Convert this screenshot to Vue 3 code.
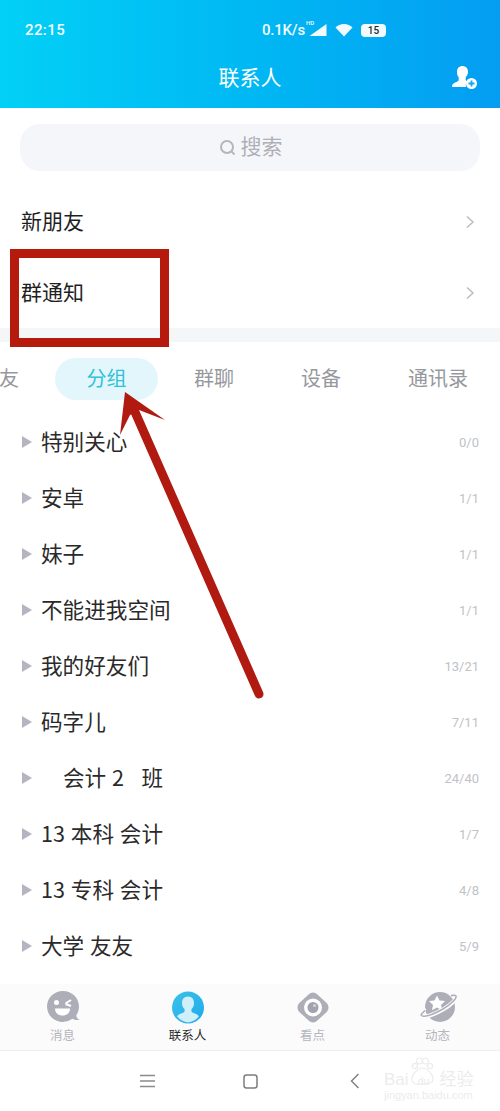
<template>
  <div class="phone">
    <header class="top">
      <div class="status">
        <span class="time">22:15</span>
        <div class="status-right">
          <span class="speed">0.1K/s</span>
          <span class="hd">HD</span>
          <svg class="signal" width="18" height="14" viewBox="0 0 18 14"><path d="M17.500 1v12H.5z" fill="#fff" /></svg>
          <svg class="wifi" width="18" height="14" viewBox="0 0 18 14"><path d="M9 13.500 .5 4.600C2.600 2.300 5.600 1 9 1s6.400 1.300 8.500 3.600z" fill="#fff" /></svg>
          <span class="battery">15</span>
        </div>
      </div>
      <div class="title-bar">
        <span class="title">联系人</span>
        <svg class="add-user" width="26" height="24" viewBox="0 0 26 24">
          <path d="M10.500 0c3.300 0 5.500 2.400 5.500 5.800 0 2.400-1 4.300-2.300 5.500v2.200c0 .9.500 1.400 1.500 1.800-.9 1-1.400 2.300-1.400 3.700 0 .7.100 1.400.3 2H.8c-.5 0-.8-.3-.8-.8 0-2 2-3.200 4.400-4.200 1.500-.7 2.300-1.200 2.300-2.300v-2.400C5.500 10 5 8.100 5 5.800 5 2.400 7.200 0 10.500 0z" fill="#fff" />
          <circle cx="19.500" cy="17.500" r="5.500" fill="#fff" />
          <path d="M19.500 14.500v6M16.500 17.500h6" stroke="#1aa6ec" stroke-width="1.800" />
        </svg>
      </div>
    </header>

    <div class="search-wrap">
      <div class="search">
        <svg width="20" height="20" viewBox="0 0 20 20" fill="none" stroke="#b4b6bd" stroke-width="2">
          <circle cx="9" cy="9" r="6" />
          <path d="m13.500 13.500 3 3" />
        </svg>
        <span class="search-text">搜索</span>
      </div>
    </div>

    <div class="entry" v-for="e in entries" :key="e">
      <span class="entry-text">{{ e }}</span>
      <svg width="10" height="14" viewBox="0 0 10 14" fill="none" stroke="#b9bbc0" stroke-width="1.400"><path d="m2 1.500 6 5.500-6 5.500" /></svg>
    </div>

    <div class="gap"></div>

    <nav class="tabs">
      <span class="tab tab-cut">友</span>
      <span class="tab active">分组</span>
      <span class="tab t2">群聊</span>
      <span class="tab t3">设备</span>
      <span class="tab t4">通讯录</span>
    </nav>

    <ul class="groups">
      <li v-for="g in groups" :key="g.name">
        <i class="tri"></i>
        <span class="name" :class="{ indent: g.indent }">{{ g.name }}</span>
        <span class="count">{{ g.count }}</span>
      </li>
    </ul>

    <footer class="tabbar">
      <div class="bar-item">
        <svg width="36" height="36" viewBox="0 0 36 36">
          <path d="M18 1c9 0 16 7 16 15.500 0 3.400-1 6.400-2.800 8.900.4 2 1.500 3.500 3.300 4.500-2.800.5-5.200 0-7.200-1.200A16 16 0 0 1 18 32C9 32 2 25 2 16.500S9 1 18 1z" fill="#aeaeb9" />
          <circle cx="11.500" cy="12.500" r="2.500" fill="#fff" />
          <path d="m20.500 13.500 5.500-3.500M20.500 14l5.500 2" stroke="#fff" stroke-width="2" fill="none" />
          <path d="M10 18.500h15c0 4.500-3.300 7-7.500 7s-7.500-2.500-7.500-7z" fill="#fff" />
        </svg>
        <span>消息</span>
      </div>
      <div class="bar-item on">
        <svg width="36" height="36" viewBox="0 0 36 36">
          <defs>
            <linearGradient id="avatarFill" x1="0" y1="0" x2="1" y2="1">
              <stop offset="0" stop-color="#3cc2e6" />
              <stop offset="1" stop-color="#1fa9ee" />
            </linearGradient>
          </defs>
          <circle cx="18" cy="17.500" r="16" fill="url(#avatarFill)" />
          <path d="M18 6.500c3.800 0 6 2.800 6 6.500 0 2.800-1.100 4.900-2.600 6.200v1.500c0 1.100.9 1.800 2.800 2.500 2 .8 3.700 1.600 4.700 3.100A15.800 15.800 0 0 1 18 32.500a15.800 15.800 0 0 1-10.900-6.200c1-1.500 2.700-2.300 4.700-3.100 1.900-.7 2.800-1.400 2.800-2.500v-1.500C13.100 17.900 12 15.800 12 13c0-3.700 2.200-6.500 6-6.500z" fill="#cfeffa" />
        </svg>
        <span>联系人</span>
      </div>
      <div class="bar-item">
        <svg width="38" height="36" viewBox="0 0 38 36">
          <path d="M19 2.500c1.700 0 3 .8 4.400 2l9 8.300c2.800 2.600 2.800 6.800 0 9.400l-9 8.300c-1.400 1.200-2.700 2-4.400 2s-3-.8-4.400-2l-9-8.300c-2.800-2.600-2.800-6.800 0-9.400l9-8.300c1.400-1.200 2.700-2 4.400-2z" fill="#aeaeb9" />
          <circle cx="19" cy="17.500" r="9" fill="#fff" />
          <circle cx="19" cy="17.500" r="5.500" fill="#a3a3af" />
          <circle cx="20.500" cy="15.500" r="1.500" fill="#d5d5dc" />
        </svg>
        <span>看点</span>
      </div>
      <div class="bar-item">
        <svg width="38" height="36" viewBox="0 0 38 36">
          <circle cx="21" cy="17" r="15" fill="#aeaeb9" />
          <path d="m18 5.500 2.500 5 5.500.6-4 3.800 1 5.400-5-2.700-5 2.700 1-5.400-4-3.800 5.500-.6z" fill="#fff" />
          <path d="M6 18C3 21 .5 24.500 2 26c2.500 2 12-1 22-6.500 8-4.500 14.500-11 13.500-13.500-.5-1-2.500-1.300-5.500-.5" fill="none" stroke="#fbfbfb" stroke-width="4" />
          <path d="M6 20.500C3.500 23 1.500 24.500 2.500 25.500c2.500 2 11.500-1 21.500-6.500 8-4.500 14-11 13-13-.5-1-2.500-1-5-.4" fill="none" stroke="#aeaeb9" stroke-width="1.600" />
        </svg>
        <span>动态</span>
      </div>
    </footer>

    <div class="navbar">
      <svg width="15" height="14" viewBox="0 0 15 14" stroke="#8b8b8b" stroke-width="1.300"><path d="M0 1.500h15M0 7h15M0 12.500h15" /></svg>
      <svg width="15" height="15" viewBox="0 0 15 15" fill="none" stroke="#7d7d7d" stroke-width="1.500"><rect x="1" y="1" width="13" height="13" rx="2.500" /></svg>
      <svg class="nav-back" width="12" height="18" viewBox="0 0 12 18" fill="none" stroke="#7d7d7d" stroke-width="1.400"><path d="M9.500 2 2.500 9l7 7" /></svg>
    </div>

    <div class="watermark">
      <svg class="paw" width="23" height="28" viewBox="0 0 23 28" fill="none" stroke="#ececec" stroke-width="1.200">
        <circle cx="4" cy="9" r="2.600" />
        <circle cx="8.500" cy="4" r="3" />
        <circle cx="14.500" cy="4" r="3" />
        <circle cx="19" cy="9" r="2.600" />
        <path d="M11.500 11C7 11 1 17 1 22s5 6 10.500 5S22 27 22 22s-6-11-10.500-11z" />
      </svg>
      <span class="wm-top">Bai<span class="wm-du">du</span>经验</span>
      <span class="wm-sub">jingyan.baidu.com</span>
    </div>

    <div class="red-box"></div>
    <svg class="arrow" width="500" height="1111" viewBox="0 0 500 1111">
      <path d="M259 694 135 412" stroke="#b01a10" stroke-width="9" stroke-linecap="round" fill="none" />
      <path d="m125 392 40 28-26-10-9 5-10 20z" fill="#b01a10" />
    </svg>
  </div>
</template>

<script setup>
const entries = ['新朋友', '群通知']

const groups = [
  { name: '特别关心', count: '0/0' },
  { name: '安卓', count: '1/1' },
  { name: '妹子', count: '1/1' },
  { name: '不能进我空间', count: '1/1' },
  { name: '我的好友们', count: '13/21' },
  { name: '码字儿', count: '7/11' },
  { name: '会计 2   班', count: '24/40', indent: true },
  { name: '13 本科 会计', count: '1/7' },
  { name: '13 专科 会计', count: '4/8' },
  { name: '大学 友友', count: '5/9' },
]
</script>

<style>
html, body {
  background: #fff;
}
</style>

<style scoped>
.phone {
  position: relative;
  width: 500px;
  height: 1111px;
  overflow: hidden;
  background: #fff;
  font-family: "Noto Sans CJK SC", "Liberation Sans", sans-serif;
  color: #222;
}

.top {
  height: 108px;
  background: linear-gradient(90deg, #02d0f6 0%, #00b8f3 50%, #049df2 100%);
  color: #fff;
}

.status {
  display: flex;
  align-items: center;
  height: 60px;
  padding: 0 114px 0 25px;
  justify-content: space-between;
  box-sizing: border-box;
  font-family: Roboto, "Liberation Sans", sans-serif;
  font-weight: 500;
  opacity: 0.95;
}

.time {
  font-size: 15px;
  letter-spacing: 0.4px;
}

.status-right {
  display: flex;
  align-items: center;
  position: relative;
}

.speed {
  font-size: 15px;
  margin-right: 4px;
  letter-spacing: -0.2px;
}

.hd {
  position: absolute;
  left: 44px;
  top: -2px;
  font-size: 6px;
}

.signal,
.wifi {
  margin-right: 8px;
}

.battery {
  width: 25px;
  height: 13px;
  line-height: 13px;
  border-radius: 4px;
  background: #fff;
  color: #222;
  font-size: 10px;
  text-align: center;
}

.title-bar {
  position: relative;
  display: flex;
  justify-content: center;
  align-items: center;
  height: 36px;
}

.title {
  font-size: 21px;
  line-height: 1;
  padding-bottom: 3px;
}

.add-user {
  position: absolute;
  right: 22px;
  top: 6px;
}

.search-wrap {
  padding: 16px 20px 15px;
}

.search {
  height: 47px;
  border-radius: 20px;
  background: #f5f6fa;
  display: flex;
  justify-content: center;
  align-items: center;
  gap: 3px;
  color: #aeb0b8;
  font-size: 21px;
}

.search-text {
  line-height: 1;
  padding-bottom: 4px;
}

.entry {
  height: 71px;
  padding: 0 25px 0 21px;
  display: flex;
  justify-content: space-between;
  align-items: center;
  font-size: 21px;
  color: #1f1f1f;
}

.entry-text {
  line-height: 1;
  padding-bottom: 3px;
}

.gap {
  height: 14px;
  background: #f5f6f8;
}

.tabs {
  height: 72px;
  padding-top: 2px;
  box-sizing: border-box;
  font-size: 20px;
  color: #96989d;
  display: flex;
  align-items: center;
}

.tab {
  text-align: center;
  line-height: 1;
  padding-bottom: 2px;
}

.tab-cut {
  width: 19px;
  overflow: hidden;
  white-space: nowrap;
  direction: rtl;
}

.tab.active {
  width: 103px;
  height: 42px;
  line-height: 40px;
  padding-bottom: 0;
  border-radius: 21px;
  background: #e3f6fc;
  color: #2fc2d8;
  margin-left: 36px;
}

.t2 {
  margin-left: 36px;
}

.t3 {
  margin-left: 67px;
}

.t4 {
  margin-left: 67px;
}

.groups {
  list-style: none;
  margin: 0;
  padding: 0;
}

.groups li {
  height: 56px;
  padding: 0 21px 0 22px;
  display: flex;
  align-items: center;
}

.tri {
  width: 0;
  height: 0;
  border-left: 10px solid #b4b5c0;
  border-top: 6px solid transparent;
  border-bottom: 6px solid transparent;
  margin-right: 9px;
}

.name {
  flex: 1;
  font-size: 21.600px;
  line-height: 1;
  padding-bottom: 3px;
  color: #2a2a2a;
  white-space: pre;
  word-spacing: 1px;
}

.name.indent {
  padding-left: 22px;
}

.count {
  font-size: 13px;
  color: #c0c2c6;
  font-family: Roboto, "Liberation Sans", sans-serif;
}

.tabbar {
  position: absolute;
  left: 0;
  right: 0;
  top: 984px;
  height: 66px;
  display: flex;
  background: #fbfbfb;
  border-bottom: 1px solid #efefef;
}

.bar-item {
  flex: 1;
  display: flex;
  flex-direction: column;
  align-items: center;
  padding-top: 6px;
  font-size: 12.500px;
  color: #b5b5bd;
  line-height: 17px;
}

.bar-item svg {
  display: block;
}

.bar-item.on {
  color: #2a2a2a;
}

.navbar {
  position: absolute;
  left: 0;
  right: 0;
  top: 1051px;
  height: 60px;
  padding-left: 140px;
  display: flex;
  align-items: center;
  gap: 88px;
}

.nav-back {
  margin-left: 3px;
}

.watermark {
  position: absolute;
  left: 384px;
  top: 1071px;
  width: 92px;
  display: flex;
  flex-direction: column;
  color: #ececec;
  font-family: "Liberation Sans", "Noto Sans CJK SC", sans-serif;
}

.paw {
  position: absolute;
  left: 27px;
  top: -14px;
}

.wm-top {
  font-size: 17px;
  line-height: 18px;
  white-space: nowrap;
}

.wm-du {
  display: inline-block;
  width: 24px;
  margin: 0 4px 0 3px;
  text-align: center;
  font-size: 11px;
}

.wm-sub {
  font-size: 11px;
  line-height: 10px;
  white-space: nowrap;
}

.red-box {
  position: absolute;
  left: 10px;
  top: 249px;
  width: 159px;
  height: 98px;
  box-sizing: border-box;
  border: 9px solid #b51a0d;
}

.arrow {
  position: absolute;
  left: 0;
  top: 0;
  pointer-events: none;
}
</style>
